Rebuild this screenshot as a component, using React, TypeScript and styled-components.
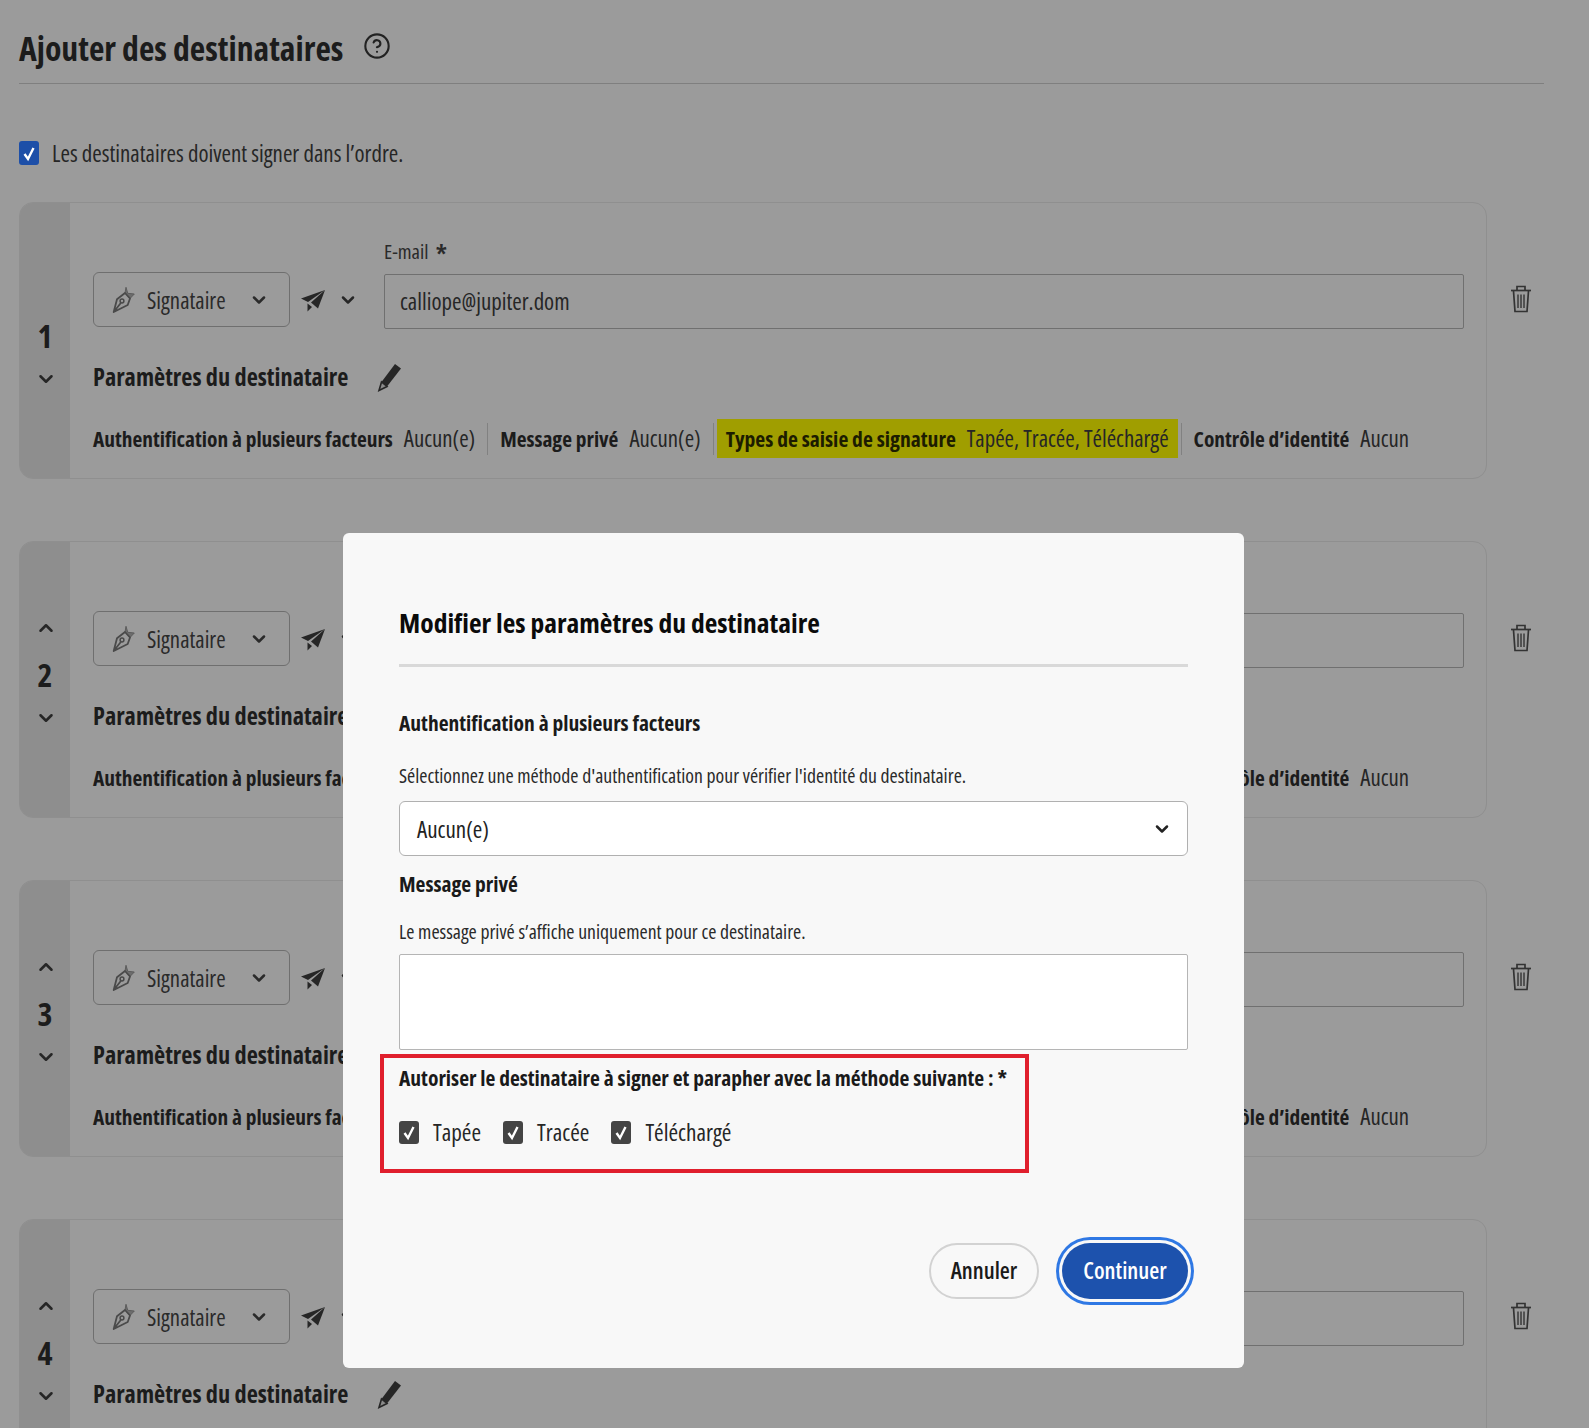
import styled, { createGlobalStyle } from 'styled-components';
import { ChevronDown, ChevronUp, CircleHelp } from 'lucide-react';

const GlobalStyle = createGlobalStyle`
  html, body {
    margin: 0;
    padding: 0;
  }

  body {
    font-family: "Open Sans", "Noto Sans", sans-serif;
    font-stretch: 75%;
    font-weight: 440;
    color: #1c1c1c;
    background: #9b9b9b;
  }

  * {
    box-sizing: border-box;
  }
`;

const Screen = styled.div`
  position: relative;
  width: 1589px;
  height: 1428px;
  overflow: hidden;
  background: #9b9b9b;
`;

const Page = styled.main`
  padding: 0 45px 0 19px;
`;

const Header = styled.header`
  display: flex;
  align-items: center;
  gap: 20px;
  height: 84px;
  padding-top: 13px;
  border-bottom: 1px solid #7f7f7f;
`;

const Title = styled.h1`
  margin: 0;
  font-size: 33.7px;
  line-height: 44px;
  font-weight: 700;
`;

const HelpIcon = styled(CircleHelp)`
  margin-bottom: 4px;
  color: #222;
`;

const OrderRow = styled.label`
  display: flex;
  align-items: center;
  gap: 13px;
  margin-top: 57px;
  height: 24px;
  font-size: 22.9px;
  color: #262626;
`;

const Box = styled.span<{ $color: string; $tall?: boolean }>`
  display: flex;
  align-items: center;
  justify-content: center;
  flex: none;
  width: 20px;
  height: ${(p) => (p.$tall ? 24 : 23)}px;
  border-radius: 3px;
  background: ${(p) => p.$color};
`;

const CardList = styled.div`
  display: flex;
  flex-direction: column;
  gap: 62px;
  margin-top: 37px;
`;

const CardRow = styled.section`
  display: flex;
  align-items: flex-start;
`;

const Card = styled.div`
  display: flex;
  flex: none;
  width: 1468px;
  height: 277px;
  border: 1px solid #8f8f8f;
  border-radius: 14px;
  overflow: hidden;
`;

const Gutter = styled.div`
  display: flex;
  flex: none;
  flex-direction: column;
  align-items: center;
  width: 50px;
  padding-top: 75px;
  background: #8e8e8e;
`;

const GutterChevron = styled.span<{ $hidden?: boolean }>`
  display: flex;
  height: 22px;
  margin-left: 1px;
  color: #262626;
  visibility: ${(p) => (p.$hidden ? 'hidden' : 'visible')};
`;

const Number = styled.div`
  margin: 16px 0 12px;
  font-size: 32px;
  line-height: 40px;
  font-weight: 700;
`;

const CardBody = styled.div`
  flex: 1;
  min-width: 0;
  padding: 38px 22px 0 23px;
`;

const TopRow = styled.div`
  display: flex;
  align-items: flex-end;
`;

const RoleSelect = styled.div`
  display: flex;
  align-items: center;
  flex: none;
  width: 197px;
  height: 55px;
  margin-bottom: 2px;
  padding: 0 20px 0 17px;
  border: 1px solid #6f6f6f;
  border-radius: 6px;
  font-size: 22.8px;
  color: #2a2a2a;

  svg:last-child {
    margin-left: auto;
  }
`;

const RoleLabel = styled.span`
  margin: 2px 0 0 10px;
`;

const SendMenu = styled.div`
  display: flex;
  align-items: center;
  flex: none;
  gap: 12px;
  width: 94px;
  height: 55px;
  margin-bottom: 2px;
  padding-left: 10px;
  color: #262626;
`;

const EmailField = styled.div`
  flex: 1;
`;

const FieldLabel = styled.div`
  display: flex;
  align-items: center;
  gap: 7px;
  height: 22px;
  margin-bottom: 11px;
  padding-bottom: 2px;
  font-size: 20.5px;
  color: #2a2a2a;
`;

const Required = styled.span`
  font-size: 28px;
  line-height: 22px;
  padding-top: 7px;
  font-weight: 600;
`;

const EmailBox = styled.div`
  display: flex;
  align-items: center;
  height: 55px;
  padding: 0 15px;
  border: 1px solid #707070;
  border-radius: 2px;
  font-size: 22.9px;
  color: #262626;
`;

const SettingsHead = styled.div`
  display: flex;
  align-items: center;
  gap: 28px;
  margin-top: 34px;
  height: 28px;
`;

const SettingsTitle = styled.h3`
  margin: 0;
  font-size: 24.3px;
  line-height: 28px;
  font-weight: 700;
`;

const Summary = styled.div`
  display: flex;
  align-items: center;
  height: 39px;
  margin-top: 28px;
  white-space: nowrap;
  font-size: 21.4px;
`;

const SummaryItem = styled.div<{ $marked?: boolean }>`
  display: flex;
  align-items: center;
  align-self: stretch;
  gap: 11px;
  padding: 0 9px;
  font-size: ${(p) => (p.$marked ? 21.6 : 21.4)}px;
  background: ${(p) => (p.$marked ? '#a09e00' : 'transparent')};
  color: ${(p) => (p.$marked ? '#1c1c00' : 'inherit')};

  &:first-child {
    padding-left: 0;
  }
`;

const SummaryKey = styled.strong`
  font-weight: 700;
`;

const SummaryValue = styled.span`
  font-size: 22.8px;
  color: #262626;
`;

const Divider = styled.span`
  flex: none;
  width: 1px;
  height: 32px;
  margin: 0 3px;
  background: #818181;
`;

const TrashButton = styled.button`
  display: flex;
  margin: 82px 0 0 23px;
  padding: 0;
  border: 0;
  background: none;
  color: #2c2c2c;
`;

const Modal = styled.div`
  position: absolute;
  left: 343px;
  top: 533px;
  display: flex;
  flex-direction: column;
  width: 901px;
  height: 835px;
  padding: 71px 56px 0;
  border-radius: 6px;
  background: #f8f8f8;
`;

const ModalTitle = styled.h2`
  margin: 0;
  font-size: 27.5px;
  line-height: 38px;
  font-weight: 700;
  color: #0b0b0b;
`;

const ModalRule = styled.hr`
  width: 100%;
  height: 3px;
  margin: 22px 0 42px;
  border: 0;
  background: #d9d9d9;
`;

const SectionTitle = styled.h3<{ $top?: number }>`
  margin: ${(p) => p.$top ?? 0}px 0 0;
  font-size: 21.5px;
  line-height: 28px;
  font-weight: 700;
  color: #1a1a1a;
`;

const Hint = styled.p<{ $top: number }>`
  margin: ${(p) => p.$top}px 0 0;
  font-size: 19.75px;
  line-height: 24px;
  color: #2a2a2a;
`;

const ModalSelect = styled.div`
  display: flex;
  align-items: center;
  justify-content: space-between;
  height: 55px;
  margin-top: 13px;
  padding: 0 15px 0 17px;
  border: 1px solid #b0b0b0;
  border-radius: 6px;
  background: #fff;
  font-size: 23px;
  color: #222;
`;

const MessageBox = styled.div`
  height: 96px;
  margin-top: 10px;
  border: 1px solid #b5b5b5;
  border-radius: 2px;
  background: #fff;
`;

const MethodGroup = styled.div`
  width: 649px;
  height: 119px;
  margin: 4px 0 0 -19px;
  padding: 6px 0 0 15px;
  border: 4px solid #e01f2d;
`;

const MethodRow = styled.div`
  display: flex;
  align-items: center;
  gap: 22px;
  height: 24px;
  margin-top: 28px;
`;

const Method = styled.label`
  display: flex;
  align-items: center;
  gap: 14px;
  font-size: 23.2px;
  color: #262626;
`;

const Footer = styled.div`
  display: flex;
  justify-content: flex-end;
  gap: 23px;
  margin-top: 70px;
`;

const Pill = styled.button<{ $primary?: boolean }>`
  height: 56px;
  width: ${(p) => (p.$primary ? 126 : 110)}px;
  padding: 0 0 3px;
  border: ${(p) => (p.$primary ? '0' : '2px solid #d2d2d2')};
  border-radius: 28px;
  background: ${(p) => (p.$primary ? '#1d52ad' : 'transparent')};
  box-shadow: ${(p) => (p.$primary ? '0 0 0 3px #f8f8f8, 0 0 0 6px #2f78e4' : 'none')};
  color: ${(p) => (p.$primary ? '#fff' : '#1a1a1a')};
  font-family: inherit;
  font-stretch: inherit;
  font-size: 23px;
  font-weight: 600;
`;

function Check() {
  return (
    <svg width="14" height="17" viewBox="0 0 14 17" fill="none">
      <path d="M2.5 9 6 14 11.5 3" stroke="#fff" strokeWidth="2.4" />
    </svg>
  );
}

function PenIcon() {
  return (
    <svg width="26" height="29" viewBox="0 0 26 29" fill="none">
      <path d="M14 8 15 2.3 16.7 8.3 23.3 9 19 13.5Z" fill="#6d6d6d" stroke="#5c5c5c" strokeLinejoin="round" />
      <path
        d="M2.7 27 6 14.3 14 8 19 13.5 16.7 20Z M2.7 27 9.8 18"
        stroke="#4a4a4a"
        strokeWidth="1.8"
        strokeLinejoin="round"
      />
      <circle cx="11" cy="16" r="1.9" stroke="#4a4a4a" strokeWidth="1.5" />
    </svg>
  );
}

function PlaneIcon() {
  return (
    <svg width="26" height="26" viewBox="0 0 26 26" fill="#262626">
      <path d="M1 11.5 25 3 8 15Z" />
      <path d="M25 3 11 15.5 18 21.5Z" />
      <path d="M7.5 16.5 7.5 24.5 12 20Z" />
    </svg>
  );
}

function PencilIcon() {
  return (
    <svg width="26" height="29" viewBox="0 0 26 29" fill="none">
      <path d="M19 1 25 5.5 11 23.5 5.5 19Z" fill="#262626" />
      <path d="M5.5 19 11 23.5 3 27.5Z" fill="#8a8a8a" stroke="#262626" strokeWidth="1.6" />
    </svg>
  );
}

function TrashIcon() {
  return (
    <svg width="22" height="30" viewBox="0 0 22 30" fill="none" stroke="#333" strokeWidth="1.7">
      <path d="M1 6.5H21" />
      <path d="M7 6V2.5H15V6" />
      <path d="M3.5 7 5 27.5H17L18.5 7" />
      <path d="M8 10.5V24M11 10.5V24M14 10.5V24" strokeWidth="1.4" />
    </svg>
  );
}

function RecipientCard({ index, email }: { index: number; email?: string }) {
  return (
    <CardRow>
      <Card>
        <Gutter>
          <GutterChevron $hidden={index === 1}>
            <ChevronUp size={22} strokeWidth={2.8} />
          </GutterChevron>
          <Number>{index}</Number>
          <GutterChevron>
            <ChevronDown size={22} strokeWidth={2.8} />
          </GutterChevron>
        </Gutter>
        <CardBody>
          <TopRow>
            <RoleSelect>
              <PenIcon />
              <RoleLabel>Signataire</RoleLabel>
              <ChevronDown size={20} strokeWidth={3} />
            </RoleSelect>
            <SendMenu>
              <PlaneIcon />
              <ChevronDown size={20} strokeWidth={3} />
            </SendMenu>
            <EmailField>
              <FieldLabel>
                E-mail <Required>*</Required>
              </FieldLabel>
              <EmailBox>{email}</EmailBox>
            </EmailField>
          </TopRow>
          <SettingsHead>
            <SettingsTitle>Paramètres du destinataire</SettingsTitle>
            <PencilIcon />
          </SettingsHead>
          <Summary>
            <SummaryItem>
              <SummaryKey>Authentification à plusieurs facteurs</SummaryKey>
              <SummaryValue>Aucun(e)</SummaryValue>
            </SummaryItem>
            <Divider />
            <SummaryItem>
              <SummaryKey>Message privé</SummaryKey>
              <SummaryValue>Aucun(e)</SummaryValue>
            </SummaryItem>
            <Divider />
            <SummaryItem $marked>
              <SummaryKey>Types de saisie de signature</SummaryKey>
              <SummaryValue>Tapée, Tracée, Téléchargé</SummaryValue>
            </SummaryItem>
            <Divider />
            <SummaryItem>
              <SummaryKey>Contrôle d’identité</SummaryKey>
              <SummaryValue>Aucun</SummaryValue>
            </SummaryItem>
          </Summary>
        </CardBody>
      </Card>
      <TrashButton>
        <TrashIcon />
      </TrashButton>
    </CardRow>
  );
}

export default function App() {
  return (
    <Screen>
      <GlobalStyle />
      <Page>
        <Header>
          <Title>Ajouter des destinataires</Title>
          <HelpIcon size={28} strokeWidth={1.8} />
        </Header>
        <OrderRow>
          <Box $color="#1d4fa8" $tall>
            <Check />
          </Box>
          Les destinataires doivent signer dans l’ordre.
        </OrderRow>
        <CardList>
          <RecipientCard index={1} email="calliope@jupiter.dom" />
          <RecipientCard index={2} />
          <RecipientCard index={3} />
          <RecipientCard index={4} />
        </CardList>
      </Page>
      <Modal>
        <ModalTitle>Modifier les paramètres du destinataire</ModalTitle>
        <ModalRule />
        <SectionTitle>Authentification à plusieurs facteurs</SectionTitle>
        <Hint $top={27}>
          Sélectionnez une méthode d'authentification pour vérifier l'identité du destinataire.
        </Hint>
        <ModalSelect>
          Aucun(e)
          <ChevronDown size={20} strokeWidth={3} />
        </ModalSelect>
        <SectionTitle $top={14}>Message privé</SectionTitle>
        <Hint $top={22}>Le message privé s’affiche uniquement pour ce destinataire.</Hint>
        <MessageBox />
        <MethodGroup>
          <SectionTitle>Autoriser le destinataire à signer et parapher avec la méthode suivante : *</SectionTitle>
          <MethodRow>
            {['Tapée', 'Tracée', 'Téléchargé'].map((label) => (
              <Method key={label}>
                <Box $color="#444">
                  <Check />
                </Box>
                {label}
              </Method>
            ))}
          </MethodRow>
        </MethodGroup>
        <Footer>
          <Pill>Annuler</Pill>
          <Pill $primary>Continuer</Pill>
        </Footer>
      </Modal>
    </Screen>
  );
}
